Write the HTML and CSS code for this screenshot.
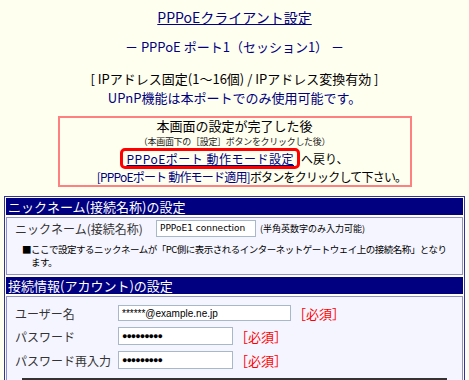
FILE: index.html
```html
<!DOCTYPE html>
<html lang="ja">

<head>
    <meta charset="UTF-8">
    <title>PPPoEクライアント設定</title>
    <link rel="stylesheet" href="styles.css">
</head>

<body>
    <header class="page-header">
        <h1 class="page-title"><a href="#">PPPoEクライアント設定</a></h1>
        <p class="port-name">－ PPPoE ポート1（セッション1） －</p>
        <p class="port-mode">[ IPアドレス固定(1～16個) / IPアドレス変換有効 ]</p>
        <p class="upnp">UPnP機能は本ポートでのみ使用可能です。</p>
    </header>

    <div class="notice">
        <p class="notice-main">本画面の設定が完了した後</p>
        <p class="notice-sub">（本画面下の［設定］ボタンをクリックした後）</p>
        <p class="notice-link"><span class="link-box"><a href="#">PPPoEポート 動作モード設定</a></span>へ戻り、</p>
        <p class="notice-apply"><span class="navy">[PPPoEポート 動作モード適用]</span>ボタンをクリックして下さい。</p>
    </div>

    <section class="panel">
        <h2 class="panel-head">ニックネーム(接続名称)の設定</h2>
        <div class="panel-body nickname">
            <div class="row">
                <span class="label nick-label">ニックネーム(接続名称)</span>
                <input class="field nick" type="text" value="PPPoE1 connection">
                <span class="hint">(半角英数字のみ入力可能)</span>
            </div>
            <p class="note">■ここで設定するニックネームが「PC側に表示されるインターネットゲートウェイ上の接続名称」となり</p>
            <p class="note cont">ます。</p>
        </div>

        <h2 class="panel-head">接続情報(アカウント)の設定</h2>
        <div class="panel-body account">
            <div class="row first">
                <span class="label">ユーザー名</span>
                <input class="field user" type="text" value="******@example.ne.jp">
                <span class="required">［必須］</span>
            </div>
            <div class="row">
                <span class="label">パスワード</span>
                <input class="field pass" type="text" value="●●●●●●●●●">
                <span class="required">［必須］</span>
            </div>
            <div class="row">
                <span class="label">パスワード再入力</span>
                <input class="field pass" type="text" value="●●●●●●●●●">
                <span class="required">［必須］</span>
            </div>
            <div class="subtable"></div>
        </div>
    </section>
</body>

</html>
```

FILE: styles.css
```css
* {
    box-sizing: border-box;
    margin: 0;
    padding: 0;
}

body {
    background-color: #ffffef;
    font-family: "Noto Sans CJK JP", "DejaVu Sans", sans-serif;
    font-size: 13px;
    color: #000;
    padding: 0 4px;
    overflow: hidden;
}

a {
    color: #000080;
}

.navy {
    color: #000080;
}

.page-header {
    text-align: center;
    padding-top: 6px;
}

.page-title {
    font-size: 14px;
    font-weight: normal;
    line-height: 22px;
}

.port-name {
    color: #000080;
    font-size: 13px;
    line-height: 20px;
    margin-top: 9px;
}

.port-mode {
    font-size: 13px;
    line-height: 20px;
    margin-top: 12px;
}

.upnp {
    color: #000080;
    font-size: 13px;
    line-height: 18px;
}

/* 注意枠 */
.notice {
    width: 354px;
    margin: 9px auto 0;
    border: 2px solid #ff8080;
    text-align: center;
}

.notice p {
    white-space: nowrap;
}

.notice-main {
    font-size: 13px;
    line-height: 15px;
}

.notice-sub {
    font-size: 9px;
    line-height: 13px;
    margin-top: 2px !important;
    color: #222;
    letter-spacing: -0.3px;
}

.notice-link {
    font-size: 12px;
    line-height: 21px;
}

.link-box {
    display: inline-block;
    border: 3px solid #ff0000;
    border-radius: 5px;
    padding: 0 3px;
    line-height: 15px;
    letter-spacing: 0.5px;
    margin-right: 1px;
}

.notice-apply {
    font-size: 12px;
    line-height: 16px;
    letter-spacing: -0.8px;
    padding-left: 34px;
}

/* 設定パネル */
.panel {
    margin-top: 9px;
    border: 1px solid #3333a0;
    padding: 1px;
    display: flex;
    flex-direction: column;
    gap: 2px;
}

.panel-head {
    background-color: #000080;
    color: #fff;
    font-size: 13px;
    font-weight: normal;
    line-height: 17px;
    padding-left: 2px;
}

.panel-body {
    background-color: #f5f5ff;
    border: 1px solid #9090c8;
    padding: 1px 8px 5px;
}

.row {
    display: flex;
    align-items: center;
    height: 18px;
}

.label {
    width: 103px;
    font-size: 12px;
    color: #333;
}

.nick-label {
    width: 141px;
}

.field {
    font-family: "Liberation Sans", "DejaVu Sans", sans-serif;
    font-size: 10px;
    height: 17px;
    border: 1px solid #a8b8c8;
    background: #fff;
    padding: 0 3px;
    color: #000;
}

.nick {
    width: 100px;
    font-family: "DejaVu Sans", sans-serif;
    font-size: 9px;
}

.hint {
    font-size: 9px;
    margin-left: 4px;
}

.note {
    font-size: 9.5px;
    letter-spacing: -0.5px;
    line-height: 13px;
    margin-top: 6px;
    padding-left: 7px;
    white-space: nowrap;
}

.note.cont {
    margin-top: 0;
    padding-left: 16px;
}

.account {
    padding-top: 5px;
    padding-bottom: 0;
}

.account .row {
    height: 24px;
}

.account .row.first {
    height: 22px;
}

.user {
    width: 173px;
    height: 16px;
}

.pass {
    width: 115px;
    height: 18px;
    font-size: 9px;
    letter-spacing: -1px;
}

.required {
    color: #ff0000;
    font-size: 13px;
    margin-left: 2px;
}

.subtable {
    margin: 6px 7px 0;
    height: 40px;
    border-top: 2px solid #333;
}
```
